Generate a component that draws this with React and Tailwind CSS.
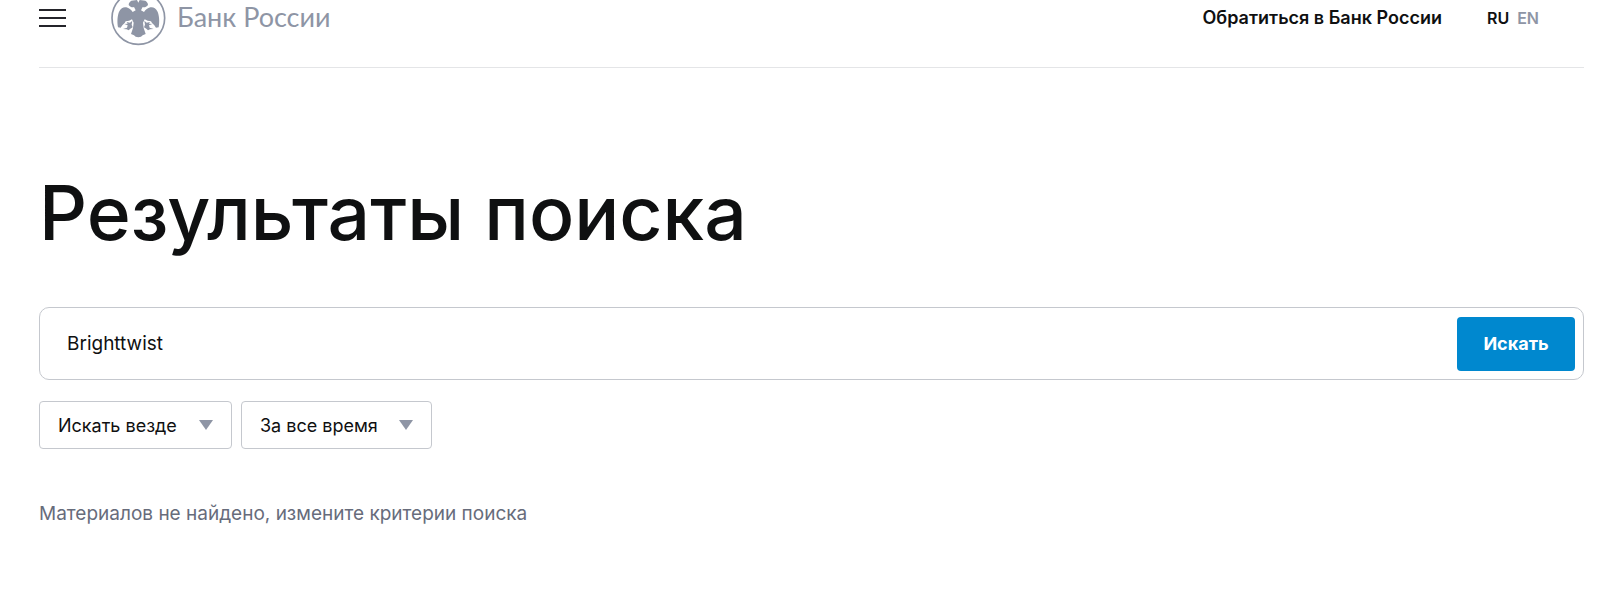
function Emblem() {
  return (
    <svg width="56" height="46" viewBox="0 0 168 138" className="shrink-0" aria-hidden="true">
      <circle cx="82" cy="54" r="79" fill="none" stroke="#8e95a5" strokeWidth="5" />
      <g fill="#8e95a5">
        <path d="M21 82 C18 66 19 46 25 34 C30 24 38 20 46 22 C54 24 60 29 65 36 L74 31 L69 21 C64 24 58 20 53 15 C53 8 57 5 61 2 L78 0 L82 8 L86 0 L103 2 C107 5 111 8 111 15 C106 20 100 24 95 21 L90 31 L99 36 C104 29 110 24 118 22 C126 20 134 24 139 34 C145 46 146 66 143 82 L135 83 L130 76 L123 69 L120 64 L110 62 L101 58 L96 68 L98 84 L104 102 L95 106 L90 110 L82 112 L74 110 L69 106 L60 102 L66 84 L68 68 L63 58 L54 62 L44 64 L41 69 L34 76 L29 83 Z" />
        <path d="M64 62 L57 68 L47 66 L50 71 L40 72 L50 76 L48 83 L36 87 L47 88 L53 91 L58 86 L65 82 L62 74 Z" />
        <path d="M100 62 L107 68 L117 66 L114 71 L124 72 L114 76 L116 83 L128 87 L117 88 L111 91 L106 86 L99 82 L102 74 Z" />
      </g>
    </svg>
  );
}

function Dropdown({ label, width, options }) {
  return (
    <div className="relative flex items-center">
      <select
        aria-label={label}
        className={`${width} h-12 appearance-none rounded border border-[#c5c8ce] bg-white pl-[18px] pr-12 text-[18px] text-[#0f1011]`}
      >
        {options.map((o) => (
          <option key={o}>{o}</option>
        ))}
      </select>
      <svg width="14" height="10" viewBox="0 0 14 10" className="pointer-events-none absolute right-[19px]" aria-hidden="true">
        <path d="M0 0H14L7 10Z" fill="#8e95a5" />
      </svg>
    </div>
  );
}

export default function App() {
  return (
    <div className="bg-white pl-[39px] pr-4 font-['Inter','Liberation_Sans',sans-serif] text-[#0f1011]">
      <header className="flex h-[68px] items-start border-b border-[#e4e5e7]">
        <button type="button" aria-label="Меню" className="mt-[9px] flex w-[27px] flex-col gap-1.5">
          <span className="h-0.5 w-full bg-[#24242a]" />
          <span className="h-0.5 w-full bg-[#24242a]" />
          <span className="h-0.5 w-full bg-[#24242a]" />
        </button>
        <a href="#" className="ml-[45px] flex items-start gap-2.5 text-[#8e95a5]">
          <Emblem />
          <span className="whitespace-nowrap font-['Lato','Noto_Sans',sans-serif] text-[27px] leading-[34px]">Банк России</span>
        </a>
        <nav className="ml-auto flex items-center pr-[45px] leading-9">
          <a href="#" className="text-[18px] font-semibold">Обратиться в Банк России</a>
          <a href="#" className="ml-[45px] text-base font-semibold">RU</a>
          <a href="#" className="ml-2 text-base font-semibold text-[#8e95a5]">EN</a>
        </nav>
      </header>
      <main>
        <h1 className="mt-[99px] text-[75px] font-medium leading-[92px]">Результаты поиска</h1>
        <form className="mt-12 flex h-[73px] items-center rounded-[10px] border border-[#c5c8ce] pr-2" onSubmit={(e) => e.preventDefault()}>
          <input aria-label="Поиск" defaultValue="Brighttwist" className="h-full min-w-0 flex-1 bg-transparent pl-[27px] text-[19px] outline-none" />
          <button type="submit" className="h-[54px] w-[118px] rounded bg-[#0088cf] text-[18px] font-bold text-white">Искать</button>
        </form>
        <div className="mt-[21px] flex gap-[9px]">
          <Dropdown label="Раздел" width="w-[193px]" options={["Искать везде"]} />
          <Dropdown label="Период" width="w-[191px]" options={["За все время"]} />
        </div>
        <p className="mt-[50px] text-[19px] leading-[30px] text-[#676c7b]">Материалов не найдено, измените критерии поиска</p>
      </main>
    </div>
  );
}
